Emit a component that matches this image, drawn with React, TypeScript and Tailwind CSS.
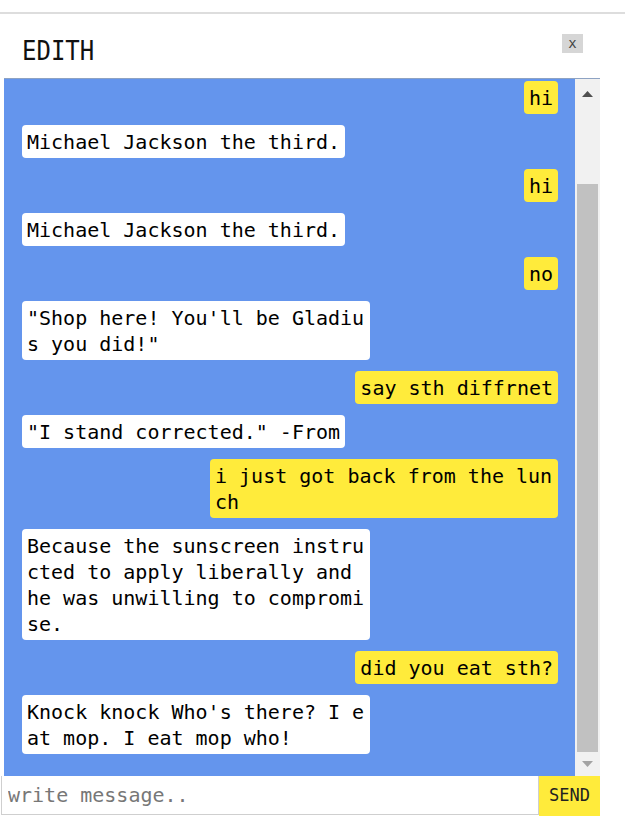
import React from "react";

type Msg = { me: boolean; text: string };

const messages: Msg[] = [
  { me: true, text: "hi" },
  { me: false, text: "Michael Jackson the third." },
  { me: true, text: "hi" },
  { me: false, text: "Michael Jackson the third." },
  { me: true, text: "no" },
  { me: false, text: "\"Shop here! You'll be Gladius you did!\"" },
  { me: true, text: "say sth diffrnet" },
  { me: false, text: "\"I stand corrected.\" -From" },
  { me: true, text: "i just got back from the lunch" },
  {
    me: false,
    text: "Because the sunscreen instructed to apply liberally and he was unwilling to compromise.",
  },
  { me: true, text: "did you eat sth?" },
  { me: false, text: "Knock knock Who's there? I eat mop. I eat mop who!" },
];

const mono = "font-['DejaVu_Sans_Mono','Liberation_Mono',monospace]";

export default function App() {
  return (
    <div className={`w-[625px] h-[829px] bg-white text-black ${mono}`}>
      <div className="h-[12px]" />
      <div className="h-[2px] bg-[#dddddd]" />
      <div className="w-[600px]">
        {/* header */}
        <div className="h-[64px] flex justify-between pl-[22px] pr-[17px]">
          <div className="pt-[25px] text-[24px] leading-[28px] text-[#111] scale-y-[1.08] origin-bottom">EDITH</div>
          <div className="mt-[20px] w-[21px] h-[19px] bg-[#d6d6d6] flex items-center justify-center text-[14px] leading-none text-[#444] pb-[1px]">
            x
          </div>
        </div>

        {/* chat */}
        <div className="ml-[4px] h-[698px] flex border-t border-[#8ea3c3]">
          <div className="flex-1 bg-[#6495ed] overflow-hidden flex flex-col gap-[11px] pt-[2px] pl-[18px] pr-[17px]">
            {messages.map((m, i) => (
              <div key={i} className={`flex ${m.me ? "justify-end" : "justify-start"}`}>
                <div
                  className={`max-w-[348px] px-[5px] py-[3.5px] rounded-[4px] text-[20px] leading-[26px] break-all whitespace-pre-wrap ${
                    m.me ? "bg-[#ffeb3b]" : "bg-white"
                  }`}
                >
                  {m.text}
                </div>
              </div>
            ))}
          </div>
          {/* scrollbar */}
          <div className="w-[25px] bg-[#f1f1f1] flex flex-col">
            <div className="h-[105px] flex justify-center pt-[12px]">
              <svg width="11" height="6" viewBox="0 0 11 6">
                <polygon points="5.5,0 11,6 0,6" fill="#505050" />
              </svg>
            </div>
            <div className="h-[568px] mx-[2px] bg-[#c1c1c1]" />
            <div className="flex-1 flex justify-center pt-[9px]">
              <svg width="11" height="6" viewBox="0 0 11 6">
                <polygon points="0,0 11,0 5.5,6" fill="#a3a3a3" />
              </svg>
            </div>
          </div>
        </div>

        {/* input */}
        <div className="flex h-[40px]">
          <div className="ml-[1px] w-[538px] h-[39px] border-l border-r border-b border-[#cfcfcf] flex items-center">
            <input
              className={`w-full h-full outline-none px-[6px] text-[20px] placeholder:text-[#777] bg-white ${mono}`}
              placeholder="write message.."
            />
          </div>
          <div className="w-[61px] bg-[#ffeb3b] flex items-center justify-center text-[17px] text-[#222]">
            SEND
          </div>
        </div>
      </div>
    </div>
  );
}
